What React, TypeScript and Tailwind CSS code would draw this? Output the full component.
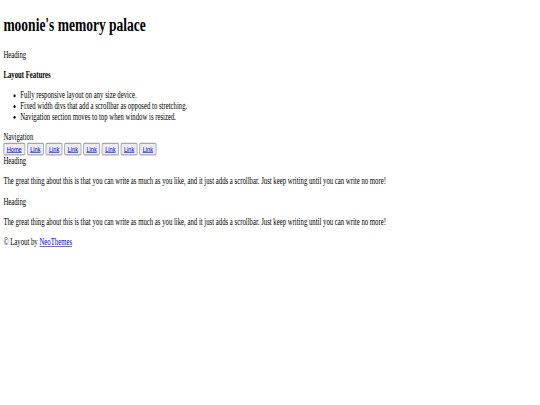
const features = [
  "Fully responsive layout on any size device.",
  "Fixed width divs that add a scrollbar as opposed to stretching.",
  "Navigation section moves to top when window is resized.",
];

const navLinks = ["Home", "Link", "Link", "Link", "Link", "Link", "Link", "Link"];

const blurb =
  "The great thing about this is that you can write as much as you like, and it just adds a scrollbar. Just keep writing until you can write no more!";

export default function App() {
  return (
    <div className="w-full h-[405px] overflow-hidden bg-white">
      {/* the page is shown squeezed, so lay it out at full size and scale it down */}
      <div className="w-[1280px] px-[8px] origin-top-left scale-x-[0.421875] scale-y-[0.6] font-['Liberation_Serif',serif] text-[16px] leading-[normal] text-black">
        <h1 className="text-[32px] font-bold pt-[22px] mb-[23px]">moonie's memory palace</h1>

        <div>Heading</div>
        <p className="my-4 font-bold">Layout Features</p>
        <ul className="list-disc pl-[40px] my-4">
          {features.map((f) => (
            <li key={f}>{f}</li>
          ))}
        </ul>

        <div>Navigation</div>
        <div className="flex gap-[4px]">
          {navLinks.map((l, i) => (
            <button
              key={i}
              className="px-[6px] py-px border-2 border-[#a5a5b0] rounded-[3px] bg-[#ececf0] font-['Liberation_Sans',Arial,sans-serif] text-[13.33px] leading-[normal]"
            >
              <a href="#" className="text-[#0000ee] underline">
                {l}
              </a>
            </button>
          ))}
        </div>

        <div>Heading</div>
        <p className="my-4">{blurb}</p>
        <p className="my-4">Heading</p>
        <p className="my-4">{blurb}</p>
        <p className="my-4">
          © Layout by{" "}
          <a href="#" className="text-[#0000ee] underline">
            NeoThemes
          </a>
        </p>
      </div>
    </div>
  );
}
